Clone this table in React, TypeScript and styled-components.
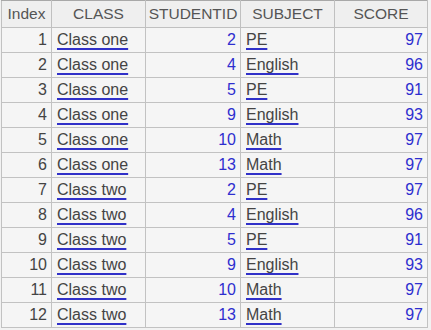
import styled, { createGlobalStyle } from "styled-components";

const GlobalStyle = createGlobalStyle`
    body {
        margin: 0;
        background: #f2f2f2;
        font-family: "Liberation Sans", Arial, sans-serif;
    }
`;

const Frame = styled.div`
    width: 431px;
    height: 330px;
    overflow: hidden;
    background: #f2f2f2;
`;

const Table = styled.table`
    border-collapse: collapse;
    table-layout: fixed;
    width: 426px;
    margin-left: 1px;
    font-size: 16px;
    border: 1px solid #a8a8a8;
    border-top: none;
`;

const HeadCell = styled.th`
    height: 26px;
    padding: 0;
    font-size: 15.5px;
    font-weight: normal;
    color: #555;
    text-align: center;
    background: #efefef;
    border: 1px solid #c0c0c0;
    border-top: 1px solid #a8a8a8;
`;

const Cell = styled.td<{ $align?: "left" | "right" }>`
    height: 24px;
    padding: 0 4px 0 5px;
    text-align: ${props => props.$align ?? "left"};
    background: #f5f5f5;
    border: 1px solid #c2c2c2;
    white-space: nowrap;
`;

const IndexNum = styled.span`
    color: #444;
`;

const Num = styled.span`
    color: #2e2ecf;
`;

const LinkText = styled.span`
    color: #444;
    text-decoration: underline;
    text-decoration-color: #3030c8;
    text-decoration-thickness: 2px;
    text-underline-offset: 3px;
`;

interface IRow {
    cls: string;
    id: number;
    subject: string;
    score: number;
}

const rows: IRow[] = [
    { cls: "Class one", id: 2, subject: "PE", score: 97 },
    { cls: "Class one", id: 4, subject: "English", score: 96 },
    { cls: "Class one", id: 5, subject: "PE", score: 91 },
    { cls: "Class one", id: 9, subject: "English", score: 93 },
    { cls: "Class one", id: 10, subject: "Math", score: 97 },
    { cls: "Class one", id: 13, subject: "Math", score: 97 },
    { cls: "Class two", id: 2, subject: "PE", score: 97 },
    { cls: "Class two", id: 4, subject: "English", score: 96 },
    { cls: "Class two", id: 5, subject: "PE", score: 91 },
    { cls: "Class two", id: 9, subject: "English", score: 93 },
    { cls: "Class two", id: 10, subject: "Math", score: 97 },
    { cls: "Class two", id: 13, subject: "Math", score: 97 },
];

function App() {
    return (
        <Frame>
            <GlobalStyle />
            <Table>
                <colgroup>
                    <col style={{ width: 50 }} />
                    <col style={{ width: 94 }} />
                    <col style={{ width: 95 }} />
                    <col style={{ width: 94 }} />
                    <col style={{ width: 93 }} />
                </colgroup>
                <thead>
                    <tr>
                        <HeadCell>Index</HeadCell>
                        <HeadCell>CLASS</HeadCell>
                        <HeadCell>STUDENTID</HeadCell>
                        <HeadCell>SUBJECT</HeadCell>
                        <HeadCell>SCORE</HeadCell>
                    </tr>
                </thead>
                <tbody>
                    {rows.map((row, i) => (
                        <tr key={i}>
                            <Cell $align="right"><IndexNum>{i + 1}</IndexNum></Cell>
                            <Cell><LinkText>{row.cls}</LinkText></Cell>
                            <Cell $align="right"><Num>{row.id}</Num></Cell>
                            <Cell><LinkText>{row.subject}</LinkText></Cell>
                            <Cell $align="right"><Num>{row.score}</Num></Cell>
                        </tr>
                    ))}
                </tbody>
            </Table>
        </Frame>
    );
}
export default App;
